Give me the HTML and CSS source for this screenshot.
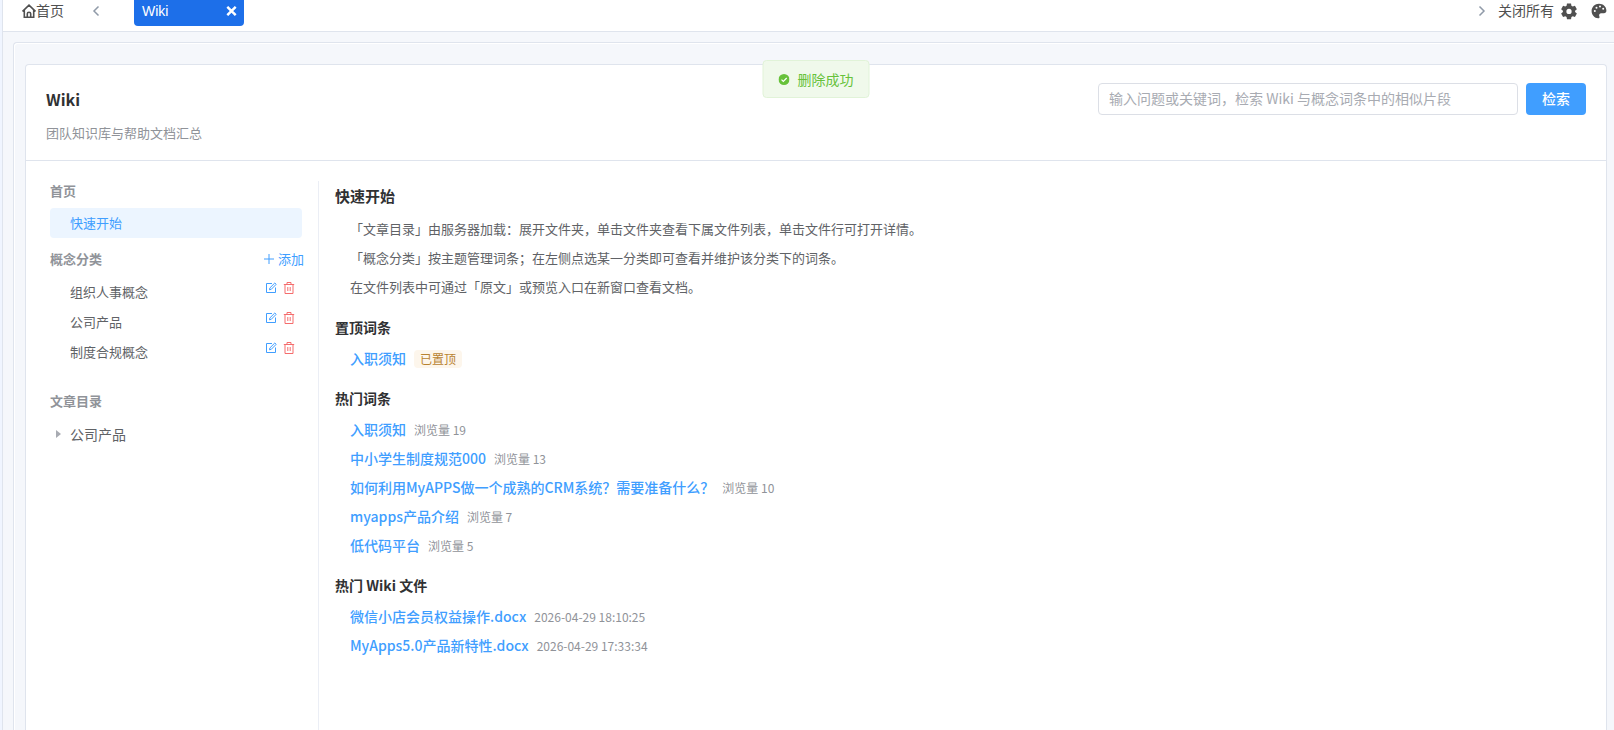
FILE: index.html
```html
<!DOCTYPE html>
<html lang="zh-CN">
<head>
    <meta charset="UTF-8">
    <meta name="viewport" content="width=device-width, initial-scale=1.0">
    <title>Wiki</title>
    <link rel="stylesheet" href="styles.css">
</head>
<body>

    <!-- Icons used more than once -->
    <svg class="sprite" aria-hidden="true">
        <symbol id="icon-edit" viewBox="0 0 12 12">
            <path d="M7 1.5H1.5v9h9V5.5" fill="none" stroke="currentColor" stroke-width="1"/>
            <path d="M4.5 7.8l.4-1.9L9.8 1l1.4 1.3-4.9 5z" fill="none" stroke="currentColor" stroke-width="1"/>
        </symbol>
        <symbol id="icon-delete" viewBox="0 0 12 12">
            <path d="M.8 2.5h10.4M4 2.5v-2h4v2M2 2.5v9h8v-9M4.8 5v4M7.2 5v4" fill="none" stroke="currentColor" stroke-width="1"/>
        </symbol>
    </svg>

    <div class="page">
        <!-- Tab bar -->
        <nav class="tabs">
            <a class="tab-home" href="#">
                <svg width="14" height="14" viewBox="0 0 14 14" fill="none" stroke="currentColor" stroke-width="1.6">
                    <path d="M.5 7.400L7 1.200l6.500 6.200M2.300 6v7.200h9.400V6M5.300 13.200V9.800c0-1 .6-1.500 1.700-1.500s1.700.5 1.700 1.500v3.400"/>
                </svg>首页
            </a>
            <button class="tab-arrow tab-prev" type="button" aria-label="向左">
                <svg width="8" height="12" viewBox="0 0 8 12"><path d="M6.5 1.5L2 6l4.5 4.5"/></svg>
            </button>
            <div class="tab-active">
                <span>Wiki</span>
                <button class="tab-close" type="button" aria-label="关闭">
                    <svg width="11" height="10" viewBox="0 0 11 10"><path d="M1.3 .8l8.4 8.4M9.7 .8L1.3 9.2"/></svg>
                </button>
            </div>
            <div class="tab-tools">
                <button class="tab-arrow" type="button" aria-label="向右">
                    <svg width="8" height="12" viewBox="0 0 8 12"><path d="M1.5 1.5L6 6l-4.5 4.5"/></svg>
                </button>
                <button class="tab-text" type="button">关闭所有</button>
                <button class="tab-icon" type="button" aria-label="设置">
                    <svg width="18" height="18" viewBox="0 0 24 24" fill="currentColor">
                        <path fill-rule="evenodd" d="M9.3 2h5.4l.5 3.1 1.8 1 2.9-1.1 2.6 4.6-2.4 2v1.8l2.4 2-2.6 4.6-2.9-1.1-1.8 1-.5 3.1H9.300l-.5-3.1-1.8-1L4.100 20l-2.600-4.600 2.400-2v-1.800l-2.400-2L4.100 5 7 6.100l1.800-1zM12 9a3.500 3.500 0 1 0 0 7 3.500 3.500 0 0 0 0-7z"/>
                    </svg>
                </button>
                <button class="tab-icon" type="button" aria-label="主题">
                    <svg width="16" height="16" viewBox="0 0 16 16">
                        <path fill="currentColor" d="M8 .8C3.900.8.600 4 .600 8s3 7.200 6.500 7.200c1.300 0 1.700-.9 1.300-1.800-.8-1.800.1-3.200 1.900-3.200h2.600c1.500 0 2.500-.9 2.500-2.500C15.400 3.600 12.100.8 8 .8z"/>
                        <g fill="#fff"><circle cx="3.800" cy="8" r="1"/><circle cx="5.500" cy="4.800" r="1"/><circle cx="9" cy="3.600" r="1"/><circle cx="12.200" cy="5.800" r="1"/></g>
                    </svg>
                </button>
            </div>
        </nav>

        <div class="frame">
            <div class="card">
                <header class="card-header">
                    <div>
                        <h1>Wiki</h1>
                        <p class="subtitle">团队知识库与帮助文档汇总</p>
                    </div>
                    <form class="search" onsubmit="return false">
                        <input type="text" aria-label="检索" placeholder="输入问题或关键词，检索 Wiki 与概念词条中的相似片段">
                        <button type="submit">检索</button>
                    </form>
                </header>

                <div class="card-body">
                    <!-- Sidebar -->
                    <aside class="sidebar">
                        <h2>首页</h2>
                        <a class="nav-item active" href="#">快速开始</a>

                        <div class="nav-head">
                            <h2>概念分类</h2>
                            <button class="add" type="button">
                                <svg width="10" height="10" viewBox="0 0 10 10"><path d="M5 0v10M0 5h10" stroke="currentColor"/></svg>
                                添加
                            </button>
                        </div>
                        <div class="nav-row">
                            <a class="nav-item" href="#">组织人事概念</a>
                            <button class="edit" type="button" aria-label="编辑"><svg><use href="#icon-edit"/></svg></button>
                            <button class="delete" type="button" aria-label="删除"><svg><use href="#icon-delete"/></svg></button>
                        </div>
                        <div class="nav-row">
                            <a class="nav-item" href="#">公司产品</a>
                            <button class="edit" type="button" aria-label="编辑"><svg><use href="#icon-edit"/></svg></button>
                            <button class="delete" type="button" aria-label="删除"><svg><use href="#icon-delete"/></svg></button>
                        </div>
                        <div class="nav-row">
                            <a class="nav-item" href="#">制度合规概念</a>
                            <button class="edit" type="button" aria-label="编辑"><svg><use href="#icon-edit"/></svg></button>
                            <button class="delete" type="button" aria-label="删除"><svg><use href="#icon-delete"/></svg></button>
                        </div>

                        <h2 class="tree-title">文章目录</h2>
                        <button class="tree-node" type="button">
                            <svg width="5" height="8" viewBox="0 0 5 8"><path d="M0 0l5 4-5 4z" fill="currentColor"/></svg>
                            公司产品
                        </button>
                    </aside>

                    <!-- Content -->
                    <main class="content">
                        <h2>快速开始</h2>
                        <ul class="tips">
                            <li>「文章目录」由服务器加载：展开文件夹，单击文件夹查看下属文件列表，单击文件行可打开详情。</li>
                            <li>「概念分类」按主题管理词条；在左侧点选某一分类即可查看并维护该分类下的词条。</li>
                            <li>在文件列表中可通过「原文」或预览入口在新窗口查看文档。</li>
                        </ul>

                        <h3>置顶词条</h3>
                        <ul class="links">
                            <li><a href="#">入职须知</a><span class="tag">已置顶</span></li>
                        </ul>

                        <h3>热门词条</h3>
                        <ul class="links">
                            <li><a href="#">入职须知</a><span class="meta">浏览量 19</span></li>
                            <li><a href="#">中小学生制度规范000</a><span class="meta">浏览量 13</span></li>
                            <li><a href="#">如何利用MyAPPS做一个成熟的CRM系统？需要准备什么？</a><span class="meta">浏览量 10</span></li>
                            <li><a href="#">myapps产品介绍</a><span class="meta">浏览量 7</span></li>
                            <li><a href="#">低代码平台</a><span class="meta">浏览量 5</span></li>
                        </ul>

                        <h3>热门 Wiki 文件</h3>
                        <ul class="links">
                            <li><a href="#">微信小店会员权益操作.docx</a><span class="meta">2026-04-29 18:10:25</span></li>
                            <li><a href="#">MyApps5.0产品新特性.docx</a><span class="meta">2026-04-29 17:33:34</span></li>
                        </ul>
                    </main>
                </div>
            </div>
        </div>
    </div>

    <!-- Success message -->
    <div class="toast" role="status">
        <svg width="11" height="11" viewBox="0 0 11 11">
            <circle cx="5.500" cy="5.500" r="5.500" fill="#67c23a"/>
            <path d="M3 5.600l1.800 1.800L8.200 4" fill="none" stroke="#fff" stroke-width="1.200"/>
        </svg>
        删除成功
    </div>

</body>
</html>
```
FILE: styles.css
```css
* {
    box-sizing: border-box;
}
body {
    margin: 0;
    background-color: #f0f5ff;
    font-family: "Noto Sans CJK SC", sans-serif;
    font-size: 14px;
    line-height: 22px;
    color: #606266;
}
h1, h2, h3, p, ul {
    margin: 0;
    padding: 0;
}
ul {
    list-style: none;
}
a {
    color: inherit;
    text-decoration: none;
}
button {
    padding: 0;
    border: none;
    background: none;
    font: inherit;
    color: inherit;
    cursor: pointer;
}
svg {
    display: block;
    flex: none;
}
.sprite {
    display: none;
}
.page {
    display: flex;
    flex-direction: column;
    height: 100vh;
    margin-left: 2px;
    border-left: 1px solid #dfe4ed;
    background-color: #f5f7fb;
    overflow: hidden;
}

/* tab bar */
.tabs {
    display: flex;
    align-items: flex-start;
    flex: none;
    height: 32px;
    padding: 0 7px 0 19px;
    border-bottom: 1px solid #dfe4ed;
    background-color: #fff;
    color: #505050;
}
.tab-home {
    display: flex;
    align-items: flex-start;
    line-height: 20px;
}
.tab-home svg {
    margin-top: 4px;
}
.tab-arrow {
    display: flex;
    align-items: center;
    height: 22px;
}
.tab-arrow path {
    fill: none;
    stroke: #909aa8;
    stroke-width: 1.5;
}
.tab-prev {
    margin: 0 34px 0 28px;
}
.tab-active {
    display: flex;
    justify-content: space-between;
    width: 110px;
    height: 26px;
    padding: 0 7px 0 8px;
    border-radius: 0 0 4px 4px;
    background-color: #1d6fe9;
    font-family: "Liberation Sans", sans-serif;
    color: #fff;
}
.tab-close {
    height: 22px;
}
.tab-close path {
    stroke: #fff;
    stroke-width: 2.4;
}
.tab-tools {
    display: flex;
    align-items: center;
    margin-left: auto;
}
.tab-text {
    align-self: flex-start;
    margin: 0 6px 0 12px;
    line-height: 20px;
}
.tab-icon + .tab-icon {
    margin-left: 13px;
}

/* main frame */
.frame {
    display: flex;
    flex: 1;
    min-height: 0;
    margin: 10px 0 0 10px;
    padding: 20px 7px 0 10px;
    border: 1px solid #dfe4ed;
    border-width: 1px 0 0 1px;
    border-radius: 4px 0 0 0;
    box-shadow: inset 1px 1px 0 #fff;
}
.card {
    display: flex;
    flex-direction: column;
    flex: 1;
    margin-top: 1px;
    margin-left: 1px;
    border: 1px solid #dfe4ed;
    border-bottom: none;
    border-radius: 4px 4px 0 0;
    background-color: #fff;
}
.card-header {
    display: flex;
    justify-content: space-between;
    padding: 18px 20px 16px;
    border-bottom: 1px solid #dfe4ed;
}
.card-header h1 {
    font-size: 16px;
    line-height: 32px;
    font-weight: 600;
    color: #303133;
}
.subtitle {
    margin-top: 7px;
    font-size: 13px;
    color: #909399;
}
.search {
    display: flex;
    gap: 8px;
}
.search input {
    width: 420px;
    height: 32px;
    padding: 0 10px 2px;
    border: 1px solid #dcdfe6;
    border-radius: 4px;
    font: inherit;
    color: #606266;
}
.search input::placeholder {
    color: #a8abb2;
}
.search button {
    width: 60px;
    height: 32px;
    padding-bottom: 2px;
    border-radius: 4px;
    background-color: #409eff;
    font-weight: 500;
    color: #fff;
}
.card-body {
    display: flex;
    flex: 1;
    padding-top: 20px;
}

/* sidebar */
.sidebar {
    width: 293px;
    padding: 0 16px 0 24px;
    border-right: 1px solid #ebeef5;
    font-size: 13px;
}
.sidebar h2 {
    font-size: 13px;
    line-height: 20px;
    font-weight: 600;
    color: #909399;
}
.nav-item {
    display: block;
    flex: 1;
    padding: 4px 20px;
    border-radius: 4px;
}
.nav-item.active {
    margin-top: 7px;
    background-color: #ecf5ff;
    color: #409eff;
}
.nav-head {
    display: flex;
    justify-content: space-between;
    margin: 11px -2px 8px 0;
}
.add {
    display: flex;
    align-items: center;
    gap: 4px;
    line-height: 20px;
    color: #409eff;
}
.nav-row {
    display: flex;
    align-items: flex-start;
    padding-right: 7px;
}
.nav-row svg {
    width: 12px;
    height: 12px;
}
.nav-row button {
    margin-top: 5px;
}
.edit {
    color: #409eff;
}
.delete {
    margin-left: 6px;
    color: #f56c6c;
}
.sidebar .tree-title {
    margin-top: 24px;
}
.tree-node {
    display: flex;
    align-items: center;
    gap: 9px;
    margin-top: 12px;
    padding-left: 6px;
    font-size: 14px;
}
.tree-node svg {
    color: #a8abb2;
}

/* content */
.content {
    flex: 1;
    padding: 0 16px;
}
.content h2 {
    font-size: 15px;
    line-height: 30px;
    font-weight: 600;
    color: #303133;
}
.content h3 {
    margin: 18px 0 9px;
    font-size: 14px;
    font-weight: 600;
    color: #303133;
}
.content ul {
    display: flex;
    flex-direction: column;
    gap: 7px;
    padding-left: 15px;
}
.content .tips {
    margin: 7px 0 18px;
    font-size: 13px;
}
.links li {
    display: flex;
    align-items: baseline;
    gap: 8px;
}
.links a {
    font-weight: 500;
    color: #409eff;
}
.meta {
    font-size: 12px;
    line-height: 20px;
    color: #909399;
}
.tag {
    padding: 0 6px;
    border-radius: 4px;
    background-color: #fdf6ec;
    font-size: 12px;
    line-height: 18px;
    color: #b88230;
}

/* message over the page */
.toast {
    position: absolute;
    top: 60px;
    left: calc(50% + 9px);
    display: flex;
    align-items: center;
    gap: 8px;
    padding: 7px 15px;
    border: 1px solid #e1f3d8;
    border-radius: 4px;
    background-color: #f0f9eb;
    color: #67c23a;
    transform: translateX(-50%);
}
```
